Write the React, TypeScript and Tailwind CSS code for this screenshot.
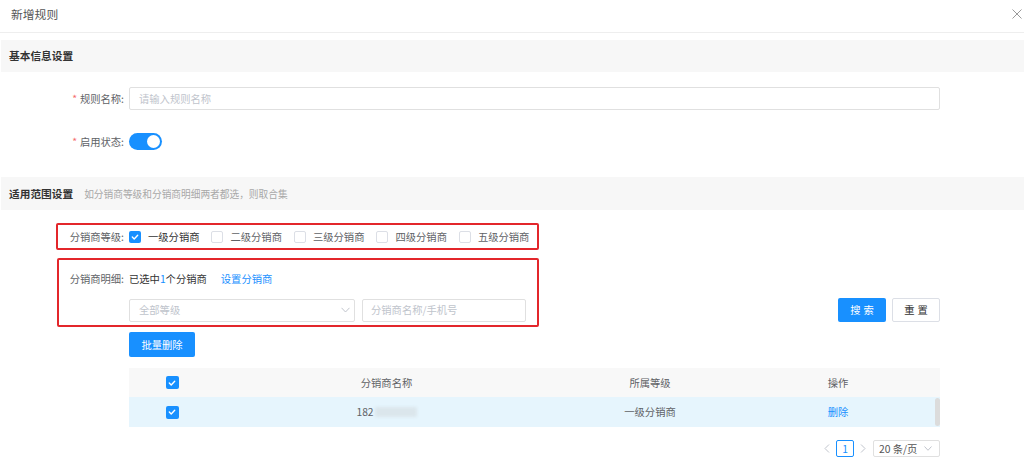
import React from "react";

const levels = ["一级分销商", "二级分销商", "三级分销商", "四级分销商", "五级分销商"];

function Check({ on, size = 12 }: { on?: boolean; size?: number }) {
  if (on) {
    return (
      <span
        className="inline-flex items-center justify-center rounded-[2px] bg-[#1890ff] shrink-0"
        style={{ width: size, height: size }}
      >
        <svg width="8" height="8" viewBox="0 0 8 8" fill="none">
          <path d="M1.3 4.1 3.2 5.9 6.7 2.2" stroke="#fff" strokeWidth="1.4" strokeLinecap="round" strokeLinejoin="round" />
        </svg>
      </span>
    );
  }
  return (
    <span
      className="inline-block rounded-[2px] border border-[#dcdfe6] bg-white shrink-0"
      style={{ width: size, height: size }}
    />
  );
}

function SectionBar({ title, hint, h }: { title: string; hint?: string; h: string }) {
  return (
    <div className={`${h} ml-[1px] flex items-center bg-[#f7f7f7] pl-[8px]`}>
      <span className="text-[10.7px] font-bold text-[#333] leading-[14px]">{title}</span>
      {hint && <span className="ml-[11px] text-[9.7px] text-[#a8a8a8] leading-[14px]">{hint}</span>}
    </div>
  );
}

export default function App() {
  return (
    <div className="relative w-[1024px] h-[475px] overflow-hidden bg-white font-['Noto_Sans_CJK_SC','Liberation_Sans',sans-serif] text-[10.3px] text-[#606266]">
      {/* header */}
      <div className="h-[33px] border-b border-[#eeeeee] flex justify-between pl-[11px] pr-[2px] pt-[6px]">
        <span className="text-[11.8px] leading-[16px] text-[#555]">新增规则</span>
        <svg className="mt-[3px]" width="10" height="10" viewBox="0 0 10 10" fill="none">
          <path d="M0.5 0.5 9.5 9.5M9.5 0.5 0.5 9.5" stroke="#9a9a9a" strokeWidth="1" />
        </svg>
      </div>

      <div className="mt-[7px]">
        <SectionBar title="基本信息设置" h="h-[32px]" />
      </div>

      {/* rule name */}
      <div className="mt-[15px] flex items-center h-[23px]">
        <div className="w-[129px] flex justify-end pr-[5px] leading-[14px]">
          <span className="text-[#f56c6c] mr-[3px]">*</span>
          <span>规则名称:</span>
        </div>
        <div className="w-[811px] h-[23px] border border-[#e0e0e0] rounded-[2px] flex items-center pl-[9px] text-[#c0c4cc]">
          请输入规则名称
        </div>
      </div>

      {/* status */}
      <div className="mt-[23px] flex items-center h-[17px]">
        <div className="w-[129px] flex justify-end pr-[5px] leading-[14px]">
          <span className="text-[#f56c6c] mr-[3px]">*</span>
          <span>启用状态:</span>
        </div>
        <div className="w-[33px] h-[17px] rounded-full bg-[#1890ff] flex items-center justify-end pr-[2px]">
          <span className="w-[13px] h-[13px] rounded-full bg-white" />
        </div>
      </div>

      <div className="mt-[27px]">
        <SectionBar title="适用范围设置" hint="如分销商等级和分销商明细两者都选，则取合集" h="h-[33px]" />
      </div>

      {/* levels */}
      <div className="mt-[17px] flex items-center h-[20px]">
        <div className="w-[129px] flex justify-end pr-[5px] leading-[14px]">分销商等级:</div>
        <div className="flex items-center gap-[12px]">
          {levels.map((l, i) => (
            <label key={l} className="flex items-center gap-[7px] leading-[14px]">
              <Check on={i === 0} />
              <span className={i === 0 ? "text-[#333]" : ""}>{l}</span>
            </label>
          ))}
        </div>
      </div>

      {/* details */}
      <div className="mt-[22px] flex items-center h-[20px]">
        <div className="w-[129px] flex justify-end pr-[5px] leading-[14px]">分销商明细:</div>
        <span className="text-[#333] leading-[14px]">
          已选中<span className="text-[#1890ff]">1</span>个分销商
        </span>
        <span className="ml-[14px] text-[#1890ff] leading-[14px]">设置分销商</span>
      </div>

      {/* filters */}
      <div className="mt-[9px] ml-[129px] w-[811px] h-[24px] flex items-center">
        <div className="w-[226px] h-[23px] border border-[#e0e0e0] rounded-[2px] flex items-center justify-between pl-[9px] pr-[4px] text-[#c0c4cc]">
          <span>全部等级</span>
          <svg width="9" height="6" viewBox="0 0 9 6" fill="none">
            <path d="M0.5 0.8 4.5 5 8.5 0.8" stroke="#c0c4cc" strokeWidth="1" />
          </svg>
        </div>
        <div className="ml-[7px] w-[164px] h-[23px] border border-[#e0e0e0] rounded-[2px] flex items-center pl-[8px] text-[#c0c4cc]">
          分销商名称/手机号
        </div>
        <div className="ml-auto flex gap-[6px]">
          <button className="w-[48px] h-[24px] rounded-[2px] bg-[#1890ff] text-white text-[10.3px] tracking-[3px] pl-[3px]">搜索</button>
          <button className="w-[48px] h-[24px] rounded-[2px] border border-[#dcdfe6] bg-white text-[#333] text-[10.3px] tracking-[3px] pl-[3px]">重置</button>
        </div>
      </div>

      {/* batch delete */}
      <div className="mt-[10px] ml-[129px]">
        <button className="w-[66px] h-[25px] rounded-[2px] bg-[#1890ff] text-white text-[10.3px]">批量删除</button>
      </div>

      {/* table */}
      <div className="mt-[11px] ml-[129px] w-[811px]">
        <div className="grid grid-cols-[86px_343px_184px_1fr] h-[29px] items-center bg-[#f8f8f8] leading-[14px]">
          <div className="flex justify-center"><Check on size={13} /></div>
          <div className="text-center">分销商名称</div>
          <div className="text-center">所属等级</div>
          <div className="text-center pr-[6px]">操作</div>
        </div>
        <div className="relative grid grid-cols-[86px_343px_184px_1fr] h-[30px] items-center bg-[#e6f5fd] leading-[14px]">
          <div className="flex justify-center"><Check on size={13} /></div>
          <div className="flex justify-center items-center">
            <span>182</span>
            <span className="ml-[1px] inline-block w-[42px] h-[10px] rounded-[2px] bg-[#dbe6ec] blur-[1.5px]" />
          </div>
          <div className="text-center">一级分销商</div>
          <div className="text-center pr-[6px] text-[#1890ff]">删除</div>
          <span className="absolute right-0 top-[1px] w-[5px] h-[28px] rounded-[3px] bg-[#dcdcdc]" />
        </div>
      </div>

      {/* pagination */}
      <div className="mt-[13px] w-[940px] flex justify-end items-center h-[17px] text-[#c0c4cc]">
        <svg width="6" height="9" viewBox="0 0 6 9" fill="none">
          <path d="M5 0.5 1 4.5 5 8.5" stroke="#c0c4cc" strokeWidth="1" />
        </svg>
        <span className="ml-[6px] w-[18px] h-[17px] border border-[#1890ff] rounded-[2px] text-[#1890ff] flex items-center justify-center text-[10.3px]">1</span>
        <svg className="ml-[6px]" width="6" height="9" viewBox="0 0 6 9" fill="none">
          <path d="M1 0.5 5 4.5 1 8.5" stroke="#c0c4cc" strokeWidth="1" />
        </svg>
        <div className="ml-[7px] w-[67px] h-[17px] border border-[#e0e0e0] rounded-[2px] flex items-center pl-[5px] text-[#555] text-[10.3px]">
          <span>20 条/页</span>
          <svg className="ml-[7px]" width="8" height="5" viewBox="0 0 8 5" fill="none">
            <path d="M0.5 0.5 4 4.3 7.5 0.5" stroke="#c0c4cc" strokeWidth="1" />
          </svg>
        </div>
      </div>

      {/* annotation boxes */}
      <div className="absolute left-[56px] top-[223px] w-[483px] h-[27px] border-2 border-[#e3262b] rounded-[2px]" />
      <div className="absolute left-[57px] top-[258px] w-[482px] h-[69px] border-2 border-[#e3262b] rounded-[2px]" />
    </div>
  );
}
